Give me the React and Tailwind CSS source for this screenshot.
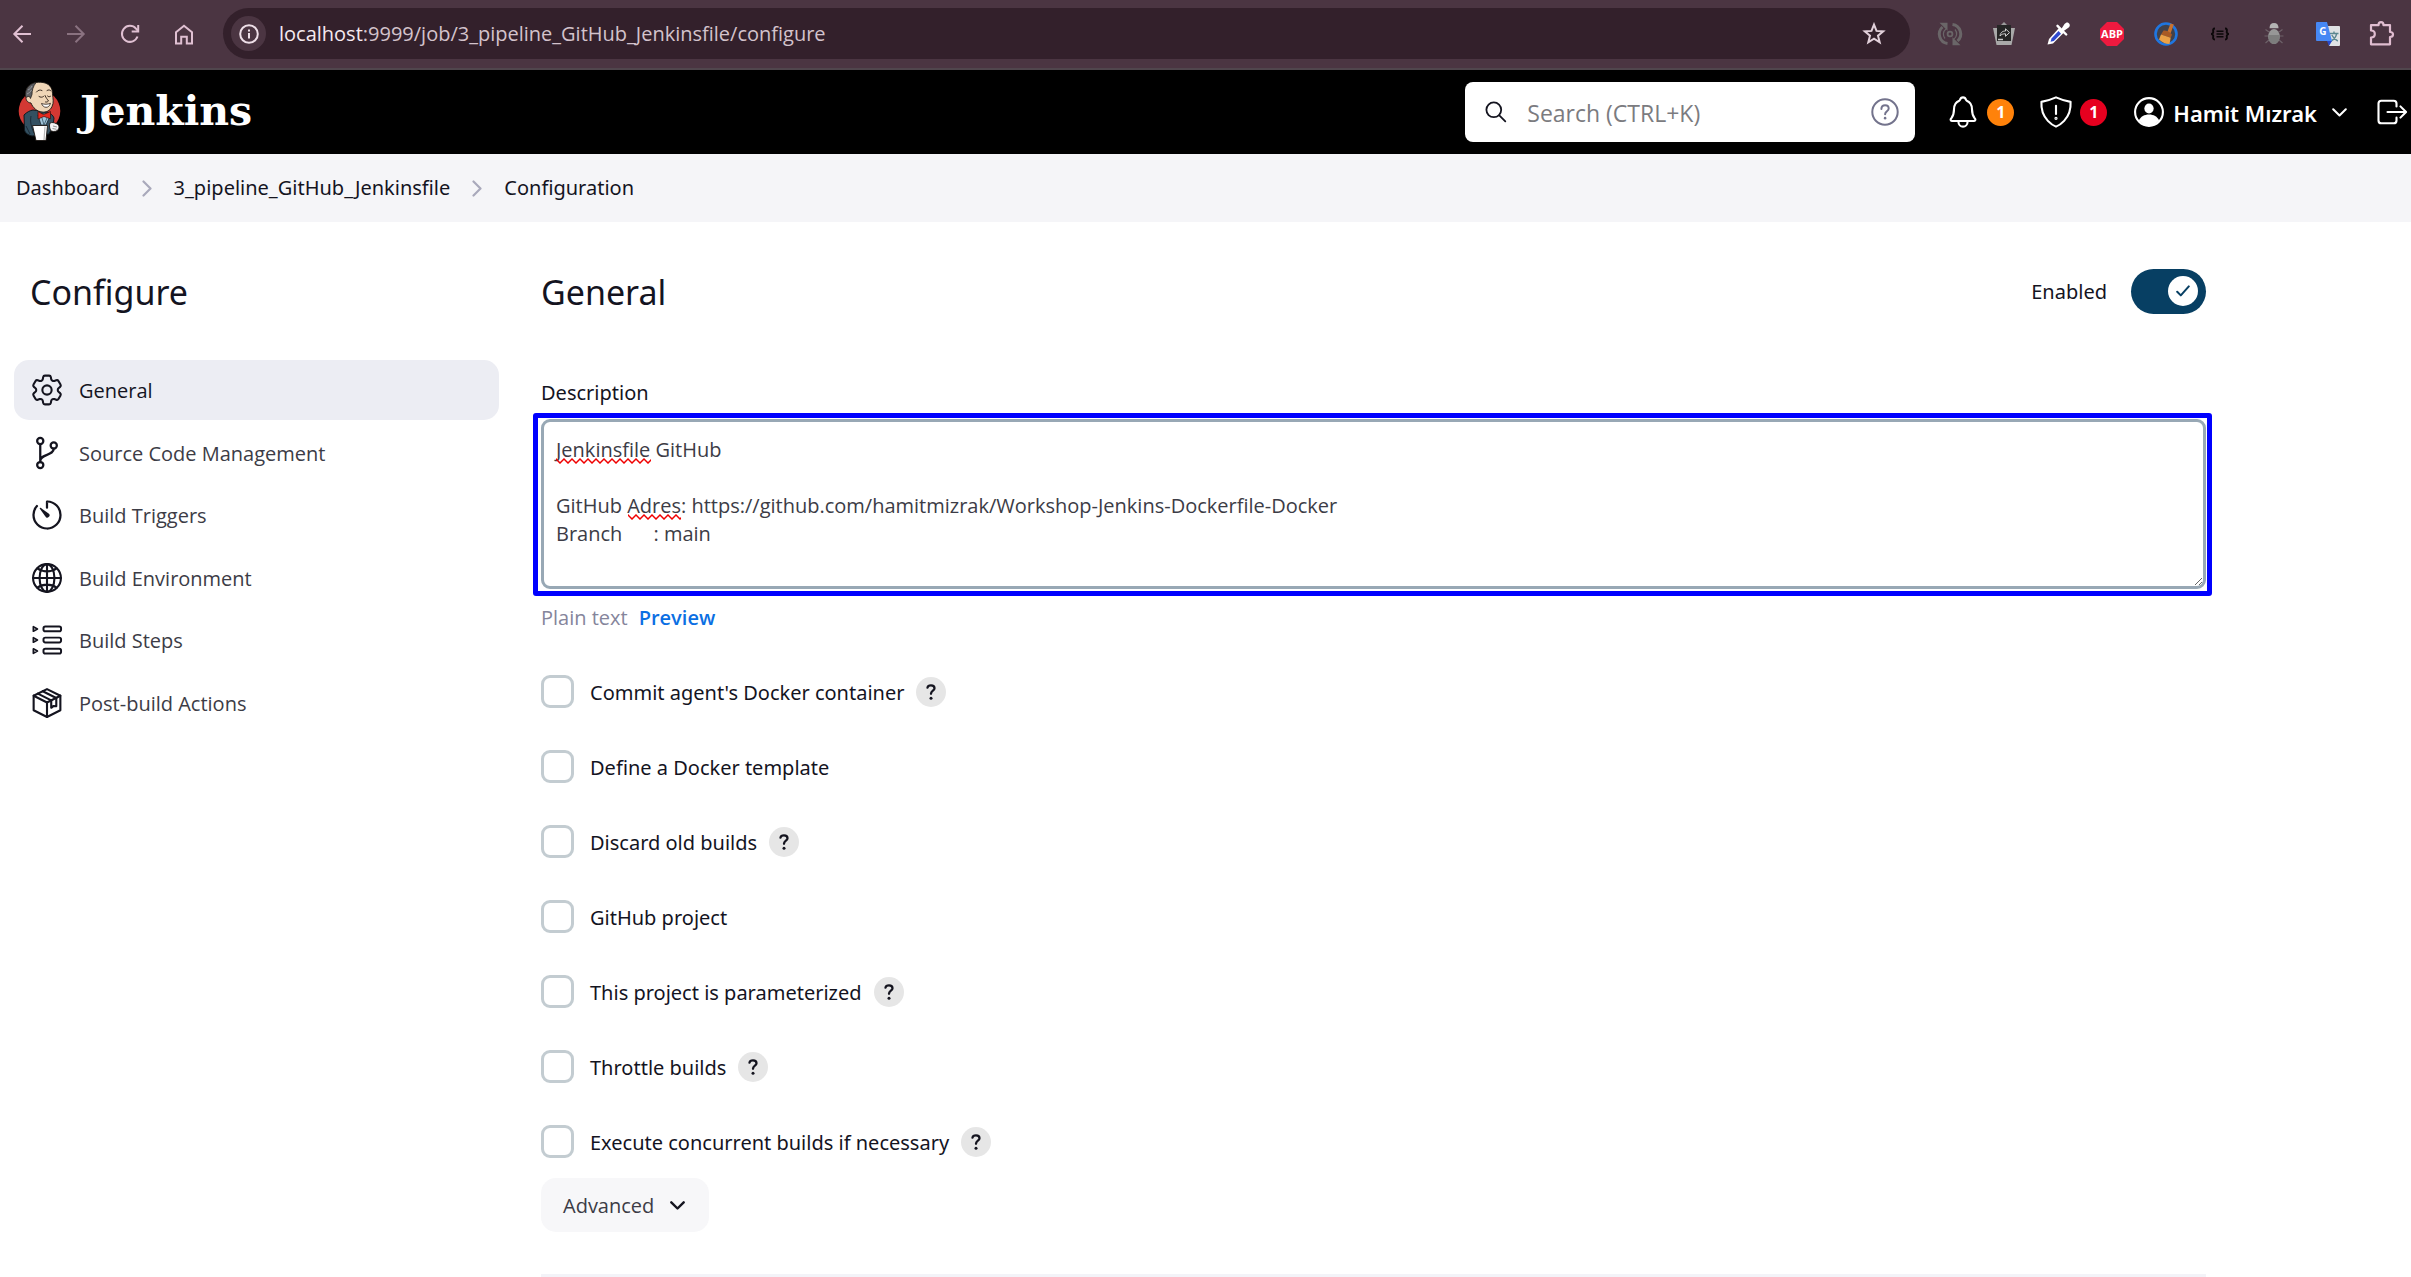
import { useState } from "react";

function Ion({ children, className = "size-9", width = 30 }) {
  return (
    <svg
      viewBox="0 0 512 512"
      className={className + " shrink-0"}
      fill="none"
      stroke="currentColor"
      strokeWidth={width}
      strokeLinecap="round"
      strokeLinejoin="round"
      aria-hidden="true"
    >
      {children}
    </svg>
  );
}

/* ---------- browser toolbar ---------- */

function NavIcon({ label, className = "text-[#e0c0d2]", children }) {
  return (
    <button type="button" aria-label={label} className={className}>
      <svg viewBox="0 0 18 18" className="size-[18px] overflow-visible" fill="none" stroke="currentColor" strokeWidth="2">
        {children}
      </svg>
    </button>
  );
}

function ExtIcon({ label, children }) {
  return (
    <button type="button" aria-label={label} className="shrink-0">
      <svg viewBox="0 0 24 24" className="size-6 overflow-visible" fill="none">
        {children}
      </svg>
    </button>
  );
}

function BrowserBar() {
  return (
    <div className="flex items-center border-b-2 border-[#50464d] bg-[#4b3542] pt-2 pr-[17px] pb-[9px] pl-[13px]">
      <div className="flex items-center gap-9">
        <NavIcon label="Back">
          <path d="M18 9H1.5M9.5 .8 1.3 9l8.2 8.2" />
        </NavIcon>
        <NavIcon label="Forward" className="text-[#8a7280]">
          <path d="M0 9h16.5M8.500 .8 16.700 9l-8.200 8.200" />
        </NavIcon>
        <NavIcon label="Reload">
          <path d="M16.500 11.500A8 8 0 1 1 15 3.600l1.800 2" />
          <path d="M17.200 0v6.500h-6.500" />
        </NavIcon>
        <NavIcon label="Home">
          <path d="M1 7.200 9 .7l8 6.500v11.300h-5.200v-6.700H6.200v6.700H1z" />
        </NavIcon>
      </div>
      <div className="ml-[30px] flex h-[51px] flex-1 items-center rounded-full bg-[#33202b] pr-6 pl-2">
        <button
          type="button"
          aria-label="View site information"
          className="flex size-[35px] items-center justify-center rounded-full bg-[#4b3542] text-[#eedfe8]"
        >
          <svg viewBox="0 0 20 20" className="size-5" fill="none" stroke="currentColor" strokeWidth="2">
            <circle cx="10" cy="10" r="8.800" />
            <path d="M10 9v5.500M10 5.500v2" />
          </svg>
        </button>
        <div className="ml-[13px] flex flex-1 items-center text-xl leading-7 text-[#d3c3cc]">
          <a href="#address" className="whitespace-nowrap">
            <span className="text-[#f5eaf0]">localhost</span>:9999/job/3_pipeline_GitHub_Jenkinsfile/configure
          </a>
        </div>
        <button type="button" aria-label="Bookmark this tab" className="text-[#e2d0da]">
          <svg viewBox="0 0 24 24" className="size-6" fill="none" stroke="currentColor" strokeWidth="2">
            <path d="m12 2.600 2.500 6.300 6.700.5-5.200 4.300 1.700 6.600-5.700-3.600-5.700 3.600L8 13.700 2.800 9.400l6.700-.5z" />
          </svg>
        </button>
      </div>
      <div className="ml-7 flex items-center gap-[30px]">
        <ExtIcon label="Auto refresh">
          <g stroke="#6a6668" strokeWidth="3">
            <path d="M9.500 21.500A9.500 9.500 0 0 1 4.500 5" />
            <path d="M14.500 2.500A9.500 9.500 0 0 1 19.500 19" />
            <path d="M17 7.500a6.500 6.500 0 0 1-1 9.500M7 16.500a6.500 6.500 0 0 1 1-9.500" strokeWidth="1.200" />
          </g>
          <path d="M1.500 .8h8v8z" fill="#6a6668" />
          <path d="M22.500 23.200h-8v-8z" fill="#6a6668" />
          <circle cx="12" cy="12" r="2.400" stroke="#6a6668" strokeWidth="1.800" />
        </ExtIcon>
        <ExtIcon label="Session share">
          <path d="m8 4 4-4 4 4z" fill="#9b9b9b" />
          <path d="M1 6h22l-3.500 17h-15z" fill="#a9a9a9" />
          <rect x="5" y="3" width="14" height="16" fill="#262626" />
          <path d="M8 14c.5-4 3-5 5.500-5V6.800l4 3.800-4 3.700v-2.500c-2.500 0-4 .4-5.500 2.200z" stroke="#d0d0d0" strokeWidth="1" />
          <path d="M6 17.500h5" stroke="#c8c8c8" strokeWidth="1.500" />
        </ExtIcon>
        <ExtIcon label="Color picker">
          <path d="M13.500 5.500 3 17l-1.500 5.500L7 21.500 18 10.500z" fill="#fff" />
          <path d="M12.500 9 5.500 16.500l-1 3.300 3.300-.8 7.200-7.200z" fill="#2d49cf" />
          <path d="m11.500 3.800 8.700 8.700" stroke="#fff" strokeWidth="2.400" strokeLinecap="round" />
          <path d="m15 7.500 3.500-5.500c1.500-2 4-2.200 5 0 .8 1.600 0 3-1.500 4L17 9.500z" fill="#fff" />
        </ExtIcon>
        <ExtIcon label="Adblock Plus">
          <path d="M7 0h10l7 7v10l-7 7H7l-7-7V7z" fill="#ee1a3f" />
          <text x="12" y="15.800" textAnchor="middle" fontSize="11" fontWeight="700" fontFamily="Open Sans, sans-serif" fill="#fff">
            ABP
          </text>
        </ExtIcon>
        <ExtIcon label="Cleaner">
          <circle cx="12" cy="12" r="10.500" fill="#41424c" stroke="#1f76e0" strokeWidth="2.600" />
          <path d="m16.500 1.500 3.300 1-3.300 9-3.300-1.300z" fill="#c9722f" />
          <path d="M9.500 8.500c3 0 7 1.500 8.500 4.200l-1.300 3L7 12.500z" fill="#a85a24" />
          <path d="M7 12.500 16.700 15.700 15.500 22c-4 0-7-1.500-10.500-4.500z" fill="#eba146" />
        </ExtIcon>
        <ExtIcon label="JSON formatter">
          <g stroke="#0c080a" strokeWidth="1.900">
            <path d="M7 6.500c-3 0-1.500 2.500-1.800 4C5 11.500 4 12 3 12c1 0 2 .5 2.200 1.500.3 1.500-1.200 4 1.800 4" />
            <path d="M17 6.500c3 0 1.500 2.500 1.800 4 .2 1 1.200 1.500 2.200 1.500-1 0-2 .5-2.200 1.500-.3 1.500 1.200 4-1.800 4" />
            <path d="M8.500 9.300h7M8.500 12h7M8.500 14.700h7" strokeWidth="1.400" />
          </g>
        </ExtIcon>
        <ExtIcon label="Bug">
          <g stroke="#6e6269" strokeWidth="1.200">
            <path d="M7 10 3.500 7.500M6.500 14H2.500M7 18l-3.500 3M17 10l3.500-2.500M17.500 14h4M17 18l3.500 3" />
          </g>
          <path d="M7.500 6.200C7.500 2.800 9 1 12 1s4.500 1.800 4.500 5.200z" fill="#b4b4b4" />
          <ellipse cx="12" cy="14.500" rx="5.800" ry="7.500" fill="#979797" />
          <path d="M6.300 13h11.400c.3 5-2 9-5.700 9s-6-4-5.700-9z" fill="#7d7d7d" />
        </ExtIcon>
        <ExtIcon label="Google Translate">
          <path d="M12 4h11a1 1 0 0 1 1 1v18a1 1 0 0 1-1 1H13z" fill="#dfe2e4" />
          <path d="M13.500 11.500h9M18 9.500v2M15 19c3-1.500 5-4 5.700-7.500M15.800 13c1.200 2.500 3 4.500 6 6" stroke="#5b8790" strokeWidth="1.400" />
          <path d="M1 0h10l5 19H1a1 1 0 0 1-1-1V1a1 1 0 0 1 1-1z" fill="#4688f4" />
          <path d="m11 19 5 0-3 5z" fill="#2948c9" />
          <text x="6.800" y="13" textAnchor="middle" fontSize="10" fontWeight="700" fontFamily="Open Sans, sans-serif" fill="#fff">
            G
          </text>
        </ExtIcon>
        <ExtIcon label="Extensions">
          <path
            d="M1 3.200h7.500c0-2 .8-3 2.500-3s2.500 1 2.500 3H20v6.800c2 0 3 .8 3 2.500s-1 2.500-3 2.500v7.300H1v-6.800c2.600 0 3.800-1.200 3.800-3.500S3.600 8.500 1 8.500z"
            stroke="#e0bdd0"
            strokeWidth="2.200"
            strokeLinejoin="round"
          />
        </ExtIcon>
      </div>
    </div>
  );
}

/* ---------- Jenkins header ---------- */

function Butler() {
  return (
    <svg viewBox="0 0 43 60" className="h-[60px] w-[43px] overflow-visible" aria-hidden="true">
      <ellipse cx="21.500" cy="29" rx="20.800" ry="20.500" fill="#d33833" />
      <path d="M6 33c3-3 6-4.500 9-5l14 2c3 1 6 3 7 6l-1 8-4 8-17 2c-4-1-7-3-7.500-6z" fill="#335061" stroke="#10191f" strokeWidth="1" />
      <path d="M13 34c-1 5 0 11 3 17M8 44l4 8" stroke="#1b2c38" strokeWidth="1" fill="none" />
      <path d="m20 33 3 10 5 0 4-9-5-3z" fill="#9fc3d8" stroke="#10191f" strokeWidth=".7" />
      <path d="m24 36 2 7M29 36l-3 7" stroke="#335061" strokeWidth=".8" />
      <path d="M9 6C12 1 19-.5 25 .5c6 1 9.500 5 9.500 11 .5 6 1.500 9-.5 13-2 4.500-6 6-10 5.500-5-.6-9-4-11-9-4-.5-5-3-5-5.500C7.500 12 7.500 9 9 6z" fill="#f0d6b7" stroke="#1a1512" strokeWidth=".9" />
      <path d="M18 .6C12 1.500 8 6 7.500 11c-.3 3 .2 5 1.500 4 1.500-1.200 3-.5 3.500 1.500l1.500-4c0-4 1-8 4-11.900z" fill="#5d5f63" stroke="#1a1512" strokeWidth=".7" />
      <path d="M10 8c2-1 3-2 4-4M9 12c2-1 3.500-2 4.500-4" stroke="#a3a6ab" strokeWidth=".8" fill="none" />
      <path d="M18.500 10c1.500-2 3.500-2.500 5.500-1.500M29 8.500c1.500-1 3-.8 4 .5M21 14.500c1.500 1 3 1 4.500 0M29.500 14c1 1 2 1 3 .3M27 13.500c1 2.500 2.500 4 3.500 5.500-1 1-2 1.300-3 1" stroke="#2a1d15" strokeWidth=".9" fill="none" strokeLinecap="round" />
      <path d="M23.500 21.500c3 1 6 1 9-.2-1 3-2.500 4-4.500 4s-3.600-1.500-4.500-3.800z" fill="#fff" stroke="#2a1d15" strokeWidth=".8" />
      <path d="M20 29.500 25.500 32.500 32.500 29.500v7.300L26 34.500l-6 2.500z" fill="#e5291f" stroke="#3a0d0a" strokeWidth=".7" />
      <path d="M14.500 43.500h15L28 58.500H18z" fill="#fff" stroke="#1a1512" strokeWidth=".9" />
      <path d="M27 44.500 26 58" stroke="#b8b8b8" strokeWidth="1.200" />
      <path d="M32 41c2-.8 4-.5 6 .5 3 1 3.500 3.500 2.500 5.500-1 2.500-4.500 3-7.500 2-1.500-2.500-2-5.500-1-8z" fill="#f4f4f4" stroke="#1a1512" strokeWidth=".9" />
      <path d="m35 44 4 1M34.500 46.500l4 .8" stroke="#6b6b6b" strokeWidth=".7" />
    </svg>
  );
}

function Header() {
  return (
    <header className="flex h-[84px] items-center bg-black pr-px pl-[18px] text-white">
      <a href="#home" className="flex items-center gap-[19px]">
        <Butler />
        <span className="pb-0.5 font-['DejaVu_Serif',serif] text-[41px] leading-[48px] font-bold">Jenkins</span>
      </a>
      <form className="ml-auto flex h-[60px] w-[450px] items-center rounded-lg bg-white pr-4 pl-5 text-[#14141f]" onSubmit={(e) => e.preventDefault()}>
        <svg viewBox="0 0 22 22" className="size-[22px] shrink-0" fill="none" stroke="currentColor" strokeWidth="1.800" strokeLinecap="round" aria-hidden="true">
          <circle cx="8.800" cy="8.800" r="7.400" />
          <path d="m14.300 14.300 6 6" />
        </svg>
        <input
          type="text"
          aria-label="Search"
          placeholder="Search (CTRL+K)"
          className="mx-5 h-10 min-w-0 flex-1 pt-0.5 text-[23px] leading-9 outline-none placeholder:text-[#7b7b80]"
        />
        <button type="button" aria-label="Search help" className="text-[#73738c]">
          <svg viewBox="0 0 28 28" className="size-7" fill="none" stroke="currentColor" strokeWidth="2" strokeLinecap="round" strokeLinejoin="round">
            <circle cx="14" cy="14" r="12.700" />
            <path d="M10.400 11c0-2.500 1.600-3.800 3.700-3.800s3.600 1.300 3.600 3.300c0 2.800-3.600 2.800-3.600 5.800" />
            <path d="M14.100 20v.2" strokeWidth="2.600" />
          </svg>
        </button>
      </form>
      <button type="button" aria-label="Notifications" className="ml-[30px] flex items-center gap-1.5">
        <Ion>
          <path d="M427.680 351.430C402 320 383.870 304 383.870 217.350 383.870 138 343.350 109.730 310 96c-4.430-1.820-8.600-6-9.950-10.550C294.200 65.540 277.800 48 256 48s-38.210 17.550-44 37.470c-1.350 4.600-5.520 8.710-9.950 10.530-33.390 13.750-73.870 41.920-73.870 121.350C128.130 304 110 320 84.320 351.430 73.680 364.450 83 384 101.610 384h308.880c18.510 0 27.770-19.610 17.190-32.570z" />
          <path d="M320 384v16a64 64 0 01-128 0v-16" />
        </Ion>
        <span className="flex size-[27px] items-center justify-center rounded-full bg-[#ff820a] text-base font-bold">1</span>
      </button>
      <button type="button" aria-label="Security warnings" className="ml-6 flex items-center gap-1.5">
        <Ion>
          <path d="M463.100 112.370C373.680 96.330 336.710 84.450 256 48c-80.710 36.450-117.680 48.330-207.100 64.370C32.700 369.130 240.580 457.790 256 464c15.420-6.210 223.300-94.870 207.100-351.630z" />
          <path d="M256 168v116" />
          <circle cx="256" cy="346" r="8" />
        </Ion>
        <span className="flex size-[27px] items-center justify-center rounded-full bg-[#e6001f] text-base font-bold">1</span>
      </button>
      <button type="button" className="ml-6 flex items-center">
        <Ion>
          <circle cx="256" cy="256" r="198" />
          <ellipse cx="256" cy="206" rx="66" ry="72" fill="currentColor" stroke="none" />
          <path d="M112 376c24-54 80-84 144-84s120 30 144 84c-34 44-84 72-144 72s-110-28-144-72z" fill="currentColor" stroke="none" />
        </Ion>
        <span className="ml-1.5 pt-0.5 font-['Noto_Sans',sans-serif] text-[22px] leading-8 font-semibold">Hamit Mızrak</span>
        <svg viewBox="0 0 15 9" className="ml-[15px] h-[9px] w-[15px]" fill="none" stroke="currentColor" strokeWidth="2" strokeLinecap="round" strokeLinejoin="round" aria-hidden="true">
          <path d="m1.200 1.200 6.300 6.300 6.300-6.300" />
        </svg>
      </button>
      <button type="button" aria-label="Log out" className="ml-[27px]">
        <Ion>
          <path d="M320 336v40a40 40 0 01-40 40H104a40 40 0 01-40-40V136a40 40 0 0140-40h176c22 0 40 18 40 40v40M376 336l80-80-80-80M192 256h256" />
        </Ion>
      </button>
    </header>
  );
}

function Crumbs() {
  const items = ["Dashboard", "3_pipeline_GitHub_Jenkinsfile", "Configuration"];
  return (
    <nav aria-label="Breadcrumb" className="bg-[#f5f5f8] py-5 pl-4 font-['Noto_Sans',sans-serif]">
      <ol className="flex items-center text-xl leading-7">
        {items.map((item, i) => (
          <li key={item} className="flex items-center">
            {i > 0 && (
              <svg viewBox="0 0 10 17" className="mx-[22px] h-[17px] w-[10px]" fill="none" stroke="#a9a9bb" strokeWidth="2.200" strokeLinecap="round" strokeLinejoin="round" aria-hidden="true">
                <path d="m1.500 1.500 7 7-7 7" />
              </svg>
            )}
            <a href={"#" + item}>{item}</a>
          </li>
        ))}
      </ol>
    </nav>
  );
}

/* ---------- side navigation ---------- */

const SECTIONS = [
  {
    label: "General",
    icon: (
      <svg viewBox="2 2 20 20" className="size-8 shrink-0" fill="none" stroke="currentColor" strokeWidth="1.300" strokeLinecap="round" strokeLinejoin="round" aria-hidden="true">
        <path d="M9.594 3.940c.09-.542.56-.94 1.110-.94h2.593c.55 0 1.020.398 1.110.94l.213 1.281c.063.374.313.686.645.87.074.04.147.083.22.127.325.196.72.257 1.075.124l1.217-.456a1.125 1.125 0 0 1 1.370.49l1.296 2.247a1.125 1.125 0 0 1-.26 1.431l-1.003.827c-.293.241-.438.613-.43.992a7.723 7.723 0 0 1 0 .255c-.008.378.137.75.43.991l1.004.827c.424.35.534.955.26 1.430l-1.298 2.247a1.125 1.125 0 0 1-1.369.491l-1.217-.456c-.355-.133-.75-.072-1.076.124a6.470 6.470 0 0 1-.22.128c-.331.183-.581.495-.644.869l-.213 1.281c-.09.543-.56.94-1.110.94h-2.594c-.55 0-1.019-.398-1.110-.94l-.213-1.281c-.062-.374-.312-.686-.644-.87a6.520 6.520 0 0 1-.22-.127c-.325-.196-.72-.257-1.076-.124l-1.217.456a1.125 1.125 0 0 1-1.369-.49l-1.297-2.247a1.125 1.125 0 0 1 .26-1.431l1.004-.827c.292-.24.437-.613.43-.991a6.932 6.932 0 0 1 0-.255c.007-.38-.138-.751-.43-.992l-1.004-.827a1.125 1.125 0 0 1-.26-1.430l1.297-2.247a1.125 1.125 0 0 1 1.370-.491l1.216.456c.356.133.751.072 1.076-.124.072-.044.146-.086.22-.128.332-.183.582-.495.644-.869l.214-1.280Z" />
        <circle cx="12" cy="12" r="2.900" />
      </svg>
    ),
  },
  {
    label: "Source Code Management",
    icon: (
      <Ion width={32}>
        <circle cx="160" cy="84" r="44" />
        <circle cx="160" cy="428" r="44" />
        <circle cx="352" cy="148" r="44" />
        <path d="M160 384V128M352 192c0 110-192 70-192 180" />
      </Ion>
    ),
  },
  {
    label: "Build Triggers",
    icon: (
      <Ion width={32}>
        <path d="M112.910 128A191.850 191.850 0 0064 254c-1.180 106.350 85.650 193.800 192 194 106.200.2 192-85.830 192-192 0-104.540-83.550-189.610-187.500-192a4.360 4.360 0 00-4.500 4.370V152" />
        <path d="M233.380 278.630l-79-113a8.130 8.130 0 0111.320-11.320l113 79a32.500 32.500 0 01-37.250 53.260 33.210 33.210 0 01-8.070-7.940z" fill="currentColor" stroke="none" />
      </Ion>
    ),
  },
  {
    label: "Build Environment",
    icon: (
      <Ion width={30}>
        <circle cx="256" cy="256" r="198" />
        <path d="M256 58c-58 0-106 88-106 198s48 198 106 198 106-88 106-198S314 58 256 58z" />
        <path d="M120 120c38 27 84 42 136 42s98-15 136-42M392 392c-38-27-84-42-136-42s-98 15-136 42M256 58v396M454 256H58" />
      </Ion>
    ),
  },
  {
    label: "Build Steps",
    icon: (
      <Ion width={28}>
        <rect x="206" y="64" width="250" height="68" rx="26" />
        <rect x="206" y="222" width="250" height="68" rx="26" />
        <rect x="206" y="380" width="250" height="68" rx="26" />
        <path d="M62 66v64l58-32zM62 224v64l58-32zM62 382v64l58-32z" strokeWidth="24" />
      </Ion>
    ),
  },
  {
    label: "Post-build Actions",
    icon: (
      <Ion width={30}>
        <path d="M256 58 446 152v208L256 456 66 360V152z" />
        <path d="M66 152l190 96 190-96M256 248v208" />
        <path d="M126 122l190 96M196 88l192 96" />
        <path d="M316 220v104l36-26 36 4V184" />
      </Ion>
    ),
  },
];

function SideNav() {
  const [active, setActive] = useState("General");
  return (
    <aside className="w-[485px] shrink-0">
      <h1 className="pl-4 font-['Noto_Sans',sans-serif] text-[34px] leading-[46px]">Configure</h1>
      <nav aria-label="Sections" className="mt-[45px] grid min-h-[373px] content-between">
        {SECTIONS.map(({ label, icon }) => (
          <button
            key={label}
            type="button"
            onClick={() => setActive(label)}
            className={
              "flex h-[60px] items-center gap-[14px] rounded-[15px] pl-[15px] text-left text-xl " +
              (active === label ? "bg-[#ecedf3]" : "")
            }
          >
            <span className="flex w-9 justify-center">{icon}</span>
            <span className={active === label ? "pt-0.5 text-[#14141f]" : "pt-0.5 text-[#3c3c46]"}>{label}</span>
          </button>
        ))}
      </nav>
    </aside>
  );
}

/* ---------- form ---------- */

const OPTIONS = [
  { label: "Commit agent's Docker container", help: true },
  { label: "Define a Docker template", help: false },
  { label: "Discard old builds", help: true },
  { label: "GitHub project", help: false },
  { label: "This project is parameterized", help: true },
  { label: "Throttle builds", help: true },
  { label: "Execute concurrent builds if necessary", help: true },
];

const DESCRIPTION = `Jenkinsfile GitHub

GitHub Adres: https://github.com/hamitmizrak/Workshop-Jenkins-Dockerfile-Docker
Branch      : main
`;

function Squiggle({ className }) {
  return (
    <svg className={"pointer-events-none absolute h-[6px] " + className} aria-hidden="true">
      <defs>
        <pattern id="wave" width="8" height="6" patternUnits="userSpaceOnUse">
          <path d="M-1 0 0 1l4 4 4-4 1-1" fill="none" stroke="#f00000" strokeWidth="1.500" />
        </pattern>
      </defs>
      <rect width="100%" height="6" fill="url(#wave)" />
    </svg>
  );
}

function Option({ label, help, index }) {
  const id = "option-" + index;
  return (
    <div className="flex items-center">
      <input id={id} type="checkbox" className="size-[33px] shrink-0 appearance-none rounded-[9px] border-3 border-[#c3ccd1] bg-white checked:border-[#073f63] checked:bg-[#073f63]" />
      <label htmlFor={id} className="pt-0.5 pl-4 font-['Noto_Sans',sans-serif] text-xl leading-7">
        {label}
      </label>
      {help && (
        <button type="button" aria-label={"Help for " + label} className="ml-3 flex size-[30px] items-center justify-center rounded-full bg-[#e6e6e6]">
          <svg viewBox="0 0 10 16" className="h-4 w-2.5" fill="none" stroke="currentColor" strokeWidth="2.300" strokeLinecap="round" strokeLinejoin="round" aria-hidden="true">
            <path d="M1.500 3.600C1.800 2 3 1.300 5 1.300s3.500 1 3.500 2.900C8.500 6.800 5 6.600 5 9.800" />
            <path d="M5 14.200v.1" strokeWidth="3" />
          </svg>
        </button>
      )}
    </div>
  );
}

function ConfigForm() {
  return (
    <main className="max-w-[1665px] min-w-0 flex-1">
      <div className="flex h-[45px] items-center justify-between">
        <h2 className="font-['Noto_Sans',sans-serif] text-[34px] leading-[46px]">General</h2>
        <label className="flex items-center gap-6 font-['Noto_Sans',sans-serif] text-xl">
          Enabled
          <span className="relative flex">
            <input type="checkbox" role="switch" defaultChecked className="peer h-[45px] w-[75px] appearance-none rounded-full bg-[#a6b4bd] checked:bg-[#073f63]" />
            <span className="pointer-events-none absolute top-[7px] right-2 flex size-[30px] items-center justify-center rounded-full bg-white text-[#073f63]">
              <svg viewBox="0 0 14 12" className="h-3 w-3.5" fill="none" stroke="currentColor" strokeWidth="2" strokeLinecap="round" strokeLinejoin="round" aria-hidden="true">
                <path d="m1.200 6.800 3.600 3.600 8-9" />
              </svg>
            </span>
          </span>
        </label>
      </div>

      <label htmlFor="description" className="mt-16 block font-['Noto_Sans',sans-serif] text-xl leading-[30px]">
        Description
      </label>
      <div className="relative mt-[11px]">
        <textarea
          id="description"
          spellCheck={false}
          defaultValue={DESCRIPTION}
          className="block h-[170px] w-full resize-y rounded-[9px] border-3 border-[#98a8b5] px-3 pt-[14px] pb-3 text-xl leading-7 text-[#3c3c46] outline-none"
        />
        <Squiggle className="top-[39px] left-[15px] w-[95px]" />
        <Squiggle className="top-[95px] left-[87px] w-[53px]" />
        <span className="pointer-events-none absolute -top-1.5 -right-1.5 -bottom-[7px] -left-2 rounded-[3px] border-5 border-[#0000ff]" />
      </div>
      <div className="mt-[15px] flex gap-[11px] text-xl leading-7">
        <span className="text-[#85859b]">Plain text</span>
        <a href="#preview" className="font-semibold text-[#0b6fe3]">
          Preview
        </a>
      </div>

      <div className="mt-[43px] grid gap-[42px]">
        {OPTIONS.map((option, i) => (
          <Option key={option.label} index={i} {...option} />
        ))}
      </div>

      <button type="button" className="mt-5 flex h-[54px] items-center gap-4 rounded-[15px] bg-[#f7f7f9] pr-6 pl-[22px] text-xl text-[#3c3c46]">
        <span className="pt-0.5">Advanced</span>
        <svg viewBox="0 0 15 9" className="h-[9px] w-[15px] text-[#14141f]" fill="none" stroke="currentColor" strokeWidth="2.400" strokeLinecap="round" strokeLinejoin="round" aria-hidden="true">
          <path d="m1.300 1.300 6.200 6.200 6.200-6.200" />
        </svg>
      </button>
      <hr className="mt-[42px] border-t-3 border-[#f3f3f8]" />
    </main>
  );
}

export default function App() {
  return (
    <div className="min-h-screen bg-white font-['Open_Sans',sans-serif] text-[#14141f]">
      <BrowserBar />
      <Header />
      <Crumbs />
      <div className="flex gap-[42px] pt-[47px] pl-[14px]">
        <SideNav />
        <ConfigForm />
      </div>
    </div>
  );
}
